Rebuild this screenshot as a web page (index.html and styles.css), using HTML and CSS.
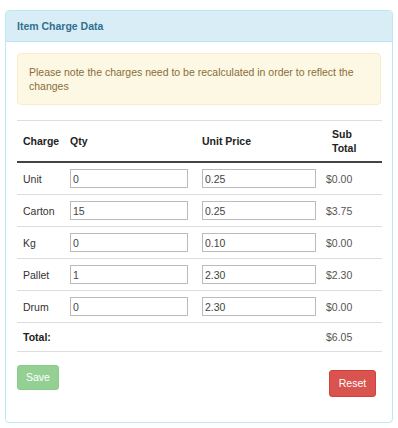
FILE: index.html
```html
<!DOCTYPE html>
<html lang="en">
<head>
  <meta charset="UTF-8" />
  <title>Item Charge Data</title>
  <link rel="stylesheet" href="styles.css">
</head>
<body>
<div class="page">
  <div class="panel">
    <div class="panel-heading">Item Charge Data</div>

    <div class="panel-body">
      <!-- Recalculation warning -->
      <div class="alert">
        Please note the charges need to be recalculated in order to reflect the changes
      </div>

      <table class="charges">
        <colgroup>
          <col class="col-charge">
          <col class="col-qty">
          <col class="col-price">
          <col class="col-sub">
        </colgroup>
        <thead>
          <tr>
            <th>Charge</th>
            <th>Qty</th>
            <th>Unit Price</th>
            <th class="sub-head">Sub<br>Total</th>
          </tr>
        </thead>
        <tbody>
          <tr>
            <td>Unit</td>
            <td><input class="qty" type="text" value="0"></td>
            <td><input class="price" type="text" value="0.25"></td>
            <td>$0.00</td>
          </tr>
          <tr>
            <td>Carton</td>
            <td><input class="qty" type="text" value="15"></td>
            <td><input class="price" type="text" value="0.25"></td>
            <td>$3.75</td>
          </tr>
          <tr>
            <td>Kg</td>
            <td><input class="qty" type="text" value="0"></td>
            <td><input class="price" type="text" value="0.10"></td>
            <td>$0.00</td>
          </tr>
          <tr>
            <td>Pallet</td>
            <td><input class="qty" type="text" value="1"></td>
            <td><input class="price" type="text" value="2.30"></td>
            <td>$2.30</td>
          </tr>
          <tr>
            <td>Drum</td>
            <td><input class="qty" type="text" value="0"></td>
            <td><input class="price" type="text" value="2.30"></td>
            <td>$0.00</td>
          </tr>
        </tbody>
        <tfoot>
          <tr>
            <th>Total:</th>
            <td></td>
            <td></td>
            <td>$6.05</td>
          </tr>
        </tfoot>
      </table>

      <div class="actions">
        <button class="btn btn-save" disabled>Save</button>
        <button class="btn btn-reset">Reset</button>
      </div>
    </div>
  </div>
</div>
</body>
</html>
```

FILE: styles.css
```css
/* Reset default margins */
body, html {
  margin: 0;
  padding: 0;
  background: #fff;
}

body {
  font-family: "Liberation Sans", Arial, sans-serif;
  font-size: 10.5px;
  line-height: 14px;
  color: #333;
}

.page {
  padding: 10px 5px;
}

/* Info panel */
.panel {
  border: 1px solid #bce8f1;
  border-radius: 4px;
  background: #fff;
}
.panel-heading {
  background-color: #d9edf7;
  border-bottom: 1px solid #bce8f1;
  border-radius: 3px 3px 0 0;
  color: #31708f;
  font-weight: bold;
  padding: 8px 11px 8px;
}
.panel-body {
  padding: 11px 11px 25px;
}

/* Warning box */
.alert {
  background-color: #fcf8e3;
  border: 1px solid #faebcc;
  border-radius: 4px;
  color: #8a6d3b;
  padding: 11px 11px;
}

/* Charges table */
.charges {
  width: 100%;
  margin-top: 15px;
  border-collapse: collapse;
  table-layout: fixed;
}
.col-charge { width: 47px; }
.col-qty { width: 132px; }
.col-price { width: 124px; }
.col-sub { width: 62px; }

.charges th,
.charges td {
  text-align: left;
  vertical-align: middle;
  padding: 6px;
  border-top: 1px solid #ddd;
}
.charges th {
  font-weight: bold;
  color: #222;
}
.charges thead th {
  border-bottom: 2px solid #444;
}
.charges .sub-head {
  padding-left: 12px;
}
.charges tbody td:last-child {
  color: #555;
}
.charges tfoot th,
.charges tfoot td {
  padding: 7px 6px;
  border-bottom: 1px solid #ddd;
}
.charges tfoot td:last-child {
  color: #555;
}

.charges input {
  box-sizing: border-box;
  display: block;
  height: 19px;
  margin: 0;
  padding: 0 2px;
  border: 1px solid #bbb;
  border-radius: 0;
  font-family: "Liberation Sans", Arial, sans-serif;
  font-size: 10.5px;
  color: #444;
  background: #fff;
}
.charges input.qty { width: 118px; }
.charges input.price { width: 114px; }

/* Buttons */
.actions {
  display: flex;
  justify-content: space-between;
  align-items: flex-start;
  margin-top: 13px;
}
.btn {
  font-family: "Liberation Sans", Arial, sans-serif;
  font-size: 10.5px;
  line-height: 15px;
  padding: 4px 8px;
  border: 1px solid transparent;
  border-radius: 3px;
  color: #fff;
  cursor: pointer;
}
.btn-save {
  width: 42px;
  background-color: #5cb85c;
  border-color: #4cae4c;
  opacity: 0.65;
  cursor: not-allowed;
}
.btn-reset {
  width: 47px;
  background-color: #d9534f;
  border-color: #d43f3a;
  margin-top: 5px;
  margin-right: 5px;
  padding: 5px 8px;
}
```
